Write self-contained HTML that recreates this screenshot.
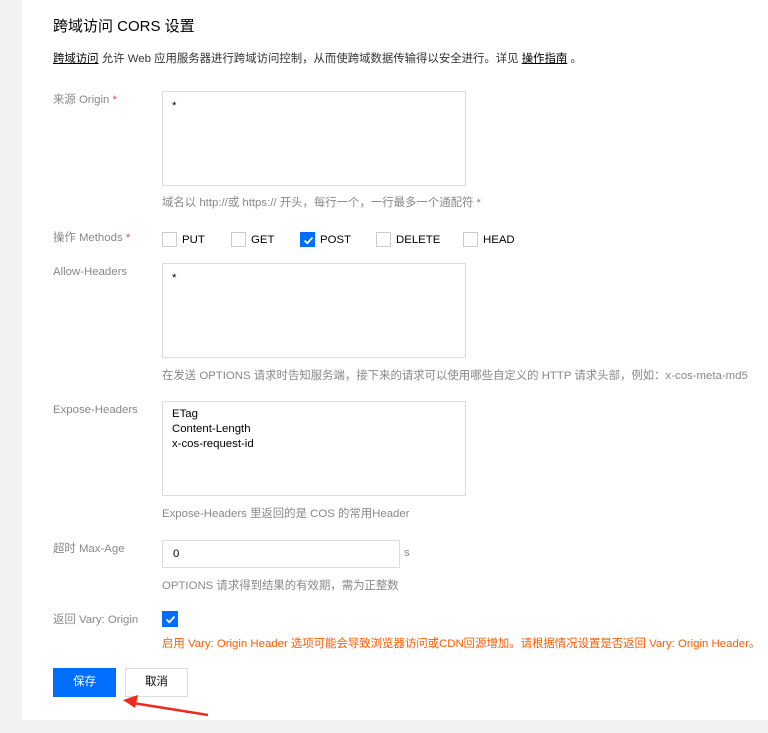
<!DOCTYPE html>
<html><head><meta charset="utf-8"><style>
*{margin:0;padding:0;box-sizing:border-box}
body{width:768px;height:733px;background:#f2f2f2;position:relative;overflow:hidden;font-family:"Liberation Sans","Noto Sans CJK SC",sans-serif;font-size:11.4px;color:#000}
.panel{position:absolute;left:22px;top:0;width:746px;height:720px;background:#fff}
.a{position:absolute;white-space:nowrap;line-height:16px}
.lab{color:#888}
.star{color:#e54545}
.help{color:#888}
.box{position:absolute;border:1px solid #ddd;background:#fff}
.cb{position:absolute;width:15px;height:15px;border:1px solid #ccc;background:#fff}
.cb.on{background:#006eff;border-color:#006eff}
.cb.on svg{position:absolute;left:2px;top:2px}
</style></head><body>
<div class="panel"></div>
<div class="a" style="left:53px;top:17px;font-size:15px;line-height:20px;color:#000">跨域访问 CORS 设置</div>
<div class="a" style="left:53px;top:51px;color:#333"><u style="color:#000">跨域访问</u> 允许 Web 应用服务器进行跨域访问控制，从而使跨域数据传输得以安全进行。详见 <u style="color:#000">操作指南</u> 。</div>

<div class="a lab" style="left:53px;top:92px">来源 Origin <span class="star">*</span></div>
<div class="box" style="left:162px;top:91px;width:304px;height:95px"></div>
<div class="a" style="left:172px;top:98px">*</div>
<div class="a help" style="left:162px;top:195px">域名以 http://或 https:// 开头，每行一个，一行最多一个通配符 *</div>

<div class="a lab" style="left:53px;top:230px">操作 Methods <span class="star">*</span></div>
<div class="cb" style="left:162px;top:232px"></div><div class="a" style="left:182px;top:232px">PUT</div>
<div class="cb" style="left:231px;top:232px"></div><div class="a" style="left:251px;top:232px">GET</div>
<div class="cb on" style="left:300px;top:232px"><svg width="11" height="11" viewBox="0 0 11 11"><path d="M1.5 5.5 L4.3 8.2 L9.5 2.5" stroke="#fff" stroke-width="1.8" fill="none"/></svg></div><div class="a" style="left:320px;top:232px">POST</div>
<div class="cb" style="left:376px;top:232px"></div><div class="a" style="left:396px;top:232px">DELETE</div>
<div class="cb" style="left:463px;top:232px"></div><div class="a" style="left:483px;top:232px">HEAD</div>

<div class="a lab" style="left:53px;top:264px">Allow-Headers</div>
<div class="box" style="left:162px;top:263px;width:304px;height:95px"></div>
<div class="a" style="left:172px;top:270px">*</div>
<div class="a help" style="left:162px;top:368px">在发送 OPTIONS 请求时告知服务端，接下来的请求可以使用哪些自定义的 HTTP 请求头部，例如：x-cos-meta-md5</div>

<div class="a lab" style="left:53px;top:402px">Expose-Headers</div>
<div class="box" style="left:162px;top:401px;width:304px;height:95px"></div>
<div class="a" style="left:172px;top:407px;line-height:15px">ETag<br>Content-Length<br>x-cos-request-id</div>
<div class="a help" style="left:162px;top:506px">Expose-Headers 里返回的是 COS 的常用Header</div>

<div class="a lab" style="left:53px;top:541px">超时 Max-Age</div>
<div class="box" style="left:162px;top:540px;width:238px;height:28px"></div>
<div class="a" style="left:173px;top:546px">0</div>
<div class="a help" style="left:404px;top:545px">s</div>
<div class="a help" style="left:162px;top:578px">OPTIONS 请求得到结果的有效期，需为正整数</div>

<div class="a lab" style="left:53px;top:612px">返回 Vary: Origin</div>
<div class="cb on" style="left:162px;top:611px;width:16px;height:16px"><svg width="11" height="11" viewBox="0 0 11 11"><path d="M1.5 5.5 L4.3 8.2 L9.5 2.5" stroke="#fff" stroke-width="1.8" fill="none"/></svg></div>
<div class="a" style="left:162px;top:636px;color:#ff5a00">启用 Vary: Origin Header 选项可能会导致浏览器访问或CDN回源增加。请根据情况设置是否返回 Vary: Origin Header。</div>

<div style="position:absolute;left:53px;top:668px;width:63px;height:29px;background:#006eff;color:#fff;text-align:center;line-height:29px">保存</div>
<div style="position:absolute;left:125px;top:668px;width:63px;height:29px;border:1px solid #ddd;background:#fff;text-align:center;line-height:27px">取消</div>
<svg style="position:absolute;left:0;top:0" width="768" height="733"><path d="M208 715 L133 703" stroke="#f0281e" stroke-width="2.5"/><path d="M123 700 L138 695 L135 708 Z" fill="#f0281e"/></svg>
</body></html>
